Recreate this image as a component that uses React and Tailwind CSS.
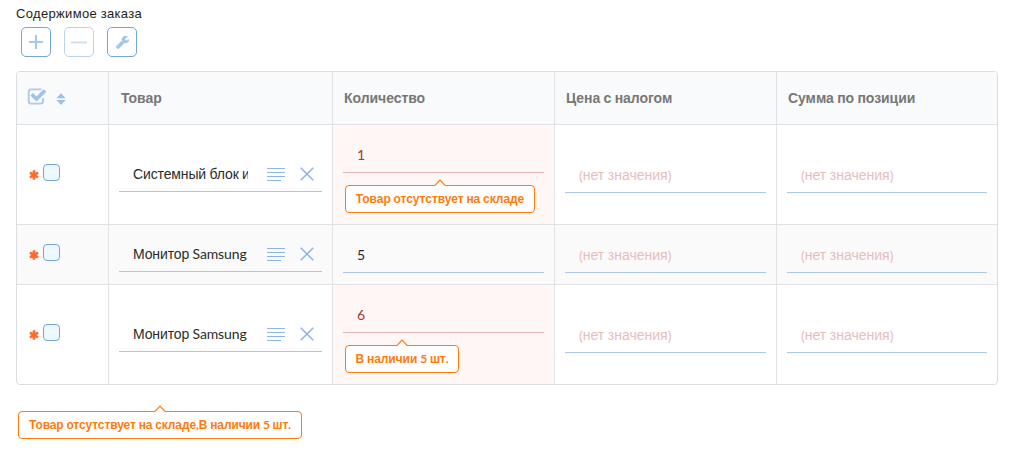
import React from 'react';

// Cyrillic runs use the sans fallback; digits, Latin letters, spaces and punctuation use Lato.
function Mixed({ text }) {
  return text
    .split(/([а-яё]+)/i)
    .filter(Boolean)
    .map((run, i) => (
      <span
        key={i}
        className={
          /[а-яё]/i.test(run)
            ? "font-['Liberation_Sans',Arial,sans-serif]"
            : "font-['Lato',sans-serif]"
        }
      >
        {run}
      </span>
    ));
}

function ToolButton({ label, muted, children }) {
  return (
    <button
      aria-label={label}
      className={`flex size-[30px] items-center justify-center rounded-[5px] border bg-white ${
        muted ? 'border-[#bcd2ec]' : 'border-[#76a5d8]'
      }`}
    >
      {children}
    </button>
  );
}

function Callout({ text, width, spacing = 'tracking-[-0.05px]' }) {
  return (
    <div
      className={`relative flex h-7 items-center justify-center rounded border border-[#ff7a0a] bg-white text-[12px] leading-4 font-bold whitespace-pre text-[#ff7a0a] ${width} ${spacing}`}
    >
      <svg className="absolute -top-[7px] left-1/2 -ml-[6px]" width="12" height="8" viewBox="0 0 12 8">
        <path d="M0.5 7 L6 1.200 L11.5 7V8H.5Z" fill="#fff" />
        <path d="M0.5 6.800 L6 1.200 L11.5 6.800" fill="none" stroke="#ff7a0a" strokeWidth="1.2" />
      </svg>
      <span className="-mt-px">
        <Mixed text={text} />
      </span>
    </div>
  );
}

function HeaderCell({ text, pad = 'pl-[11px]' }) {
  return (
    <div className={`flex items-center border-r border-[#e0e1e3] text-[14px] font-bold tracking-[-0.05px] whitespace-pre text-[#777] last:border-r-0 ${pad}`}>
      <span>
        <Mixed text={text} />
      </span>
    </div>
  );
}

function Product({ name, tall }) {
  return (
    <div className={`border-r border-[#e2e2e2] px-[10px] ${tall ? 'pt-8' : 'pt-3'}`}>
      <div className="flex h-[35px] items-center border-b border-[#adc6e2] pl-[14px] text-[14px] text-[#2b2b2b]">
        <span className="w-[115px] overflow-hidden tracking-[-0.13px] whitespace-pre">
          <Mixed text={name} />
        </span>
        <svg className="ml-[19px]" width="18" height="14" viewBox="0 0 18 14">
          <path d="M0 1.5H18M0 5.5H18M0 9.5H18M0 13.500H14" stroke="#8cb4e6" strokeWidth="1.2" />
        </svg>
        <svg className="ml-[15px]" width="14" height="14" viewBox="0 0 14 14">
          <path d="M.7 .7L13.3 13.3M13.3 .7L.7 13.3" stroke="#8cb4e6" strokeWidth="1.5" />
        </svg>
      </div>
    </div>
  );
}

function Quantity({ value, warning, width }) {
  return (
    <div className={`border-r border-[#e2e2e2] px-[10px] pt-3 ${warning ? 'bg-[#fff6f6]' : ''}`}>
      <div
        className={`flex h-9 items-center border-b pl-[14px] font-['Lato',sans-serif] text-[14px] ${
          warning ? 'border-[#e0b4b4] text-[#9f3a38]' : 'border-[#adc6e2] text-[#2b2b2b]'
        }`}
      >
        {value}
      </div>
      {warning && (
        <div className="mt-3 pl-[2px]">
          <Callout text={warning} width={width} />
        </div>
      )}
    </div>
  );
}

function EmptyValue({ tall }) {
  return (
    <div className={`border-r border-[#e2e2e2] px-[10px] last:border-r-0 ${tall ? 'pt-8' : 'pt-3'}`}>
      <div className="flex h-9 items-center border-b border-[#adc8e5] pt-px pl-[14px] text-[14px] whitespace-pre text-[#e7bdbc]">
        <Mixed text="(нет значения)" />
      </div>
    </div>
  );
}

const columns = 'grid grid-cols-[92px_224px_222px_222px_220px]';

function Row({ name, value, warning, width, tall, className }) {
  return (
    <div className={`${columns} ${className}`}>
      <div className={`flex items-start border-r border-[#e2e2e2] pl-3 ${tall ? 'pt-[39px]' : 'pt-[19px]'}`}>
        <svg className="mt-[6px] mr-1" width="10" height="10" viewBox="0 0 10 10">
          <path d="M5 .2V9.800M.9 2.600L9.100 7.400M9.100 2.600L.9 7.400" stroke="#ff6b2c" strokeWidth="2.700" />
        </svg>
        <span className="size-[17px] rounded border border-[#76a5d8] bg-[#f0f8ff]" />
      </div>
      <Product name={name} tall={tall} />
      <Quantity value={value} warning={warning} width={width} />
      <EmptyValue tall={tall} />
      <EmptyValue tall={tall} />
    </div>
  );
}

export default function App() {
  return (
    <main className="h-[454px] w-[1010px] overflow-hidden bg-white pt-[5px] pl-4 font-['Liberation_Sans',Arial,sans-serif]">
      <div className="h-[22px] text-[13px] leading-4 tracking-[0.33px] whitespace-pre text-[#222]">
        <Mixed text="Содержимое заказа" />
      </div>
      <div className="flex gap-[13px] pl-[5px]">
        <ToolButton label="Добавить">
          <svg width="14" height="14" viewBox="0 0 14 14">
            <path d="M7 0V14M0 7H14" stroke="#a8c7ea" strokeWidth="2" />
          </svg>
        </ToolButton>
        <ToolButton label="Удалить" muted>
          <svg width="16" height="14" viewBox="0 0 16 14">
            <path d="M0 7.5H16" stroke="#cfe0f4" strokeWidth="2" />
          </svg>
        </ToolButton>
        <ToolButton label="Настроить">
          <svg width="13" height="13" viewBox="0 0 1664 1664">
            <path
              fill="#a0c2ea"
              stroke="#a0c2ea"
              strokeWidth="60"
              d="M384 1344q0-26-19-45t-45-19-45 19-19 45 19 45 45 19 45-19 19-45zm644-420l-682 682q-37 37-90 37-52 0-91-37L59 1498q-38-36-38-90 0-53 38-91l681-681q39 98 114.500 173.500T1028 924zm634-435q0 39-23 106-47 134-164.500 217.500T1216 896q-185 0-316.500-131.500T768 448t131.500-316.500T1216 0q58 0 121.500 16.500T1445 63q16 11 16 28t-16 28l-293 169v224l193 107q5-3 79-48.500t135.500-81T1630 454q15 0 23.500 10t8.500 25z"
            />
          </svg>
        </ToolButton>
      </div>

      <section className="mt-[14px] w-[982px] overflow-hidden rounded border border-[#dcdddf]">
        <div className={`${columns} h-[53px] border-b border-[#e0e1e3] bg-[#f9fafb]`}>
          <div className="flex items-center border-r border-[#e0e1e3] pl-[10px]">
            <svg className="-mt-1" width="20" height="17" viewBox="0 0 20 17">
              <path
                d="M14.500 1.400H4Q1.700 1.400 1.700 4V13Q1.700 15.600 4 15.600H13.500Q16 15.600 16 13V10"
                fill="none"
                stroke="#acc9ec"
                strokeWidth="1.9"
              />
              <path d="M4.700 6.300L9.500 11L18 2.500" fill="none" stroke="#9fc2ea" strokeWidth="3.700" />
            </svg>
            <svg className="mt-[2px] ml-[9px]" width="10" height="12" viewBox="0 0 10 12">
              <path d="M.3 5.200L5 .2L9.700 5.200ZM.3 7H9.700L5 12Z" fill="#9cc0ea" />
            </svg>
          </div>
          <HeaderCell text="Товар" pad="pl-[12px]" />
          <HeaderCell text="Количество" />
          <HeaderCell text="Цена с налогом" />
          <HeaderCell text="Сумма по позиции" />
        </div>
        <Row
          className="h-[100px] border-b border-[#e2e2e2]"
          name="Системный блок игровой"
          value="1"
          warning="Товар отсутствует на складе"
          width="w-[190px]"
          tall
        />
        <Row className="h-[60px] border-b border-[#e2e2e2] bg-[#fafafa]" name="Монитор Samsung" value="5" />
        <Row
          className="h-[99px]"
          name="Монитор Samsung"
          value="6"
          warning="В наличии 5 шт."
          width="w-[114px]"
          tall
        />
      </section>

      <div className="mt-[26px] pl-[2px]">
        <Callout
          text="Товар отсутствует на складе,В наличии 5 шт."
          width="w-[284px]"
          spacing="tracking-[-0.1px]"
        />
      </div>
    </main>
  );
}
